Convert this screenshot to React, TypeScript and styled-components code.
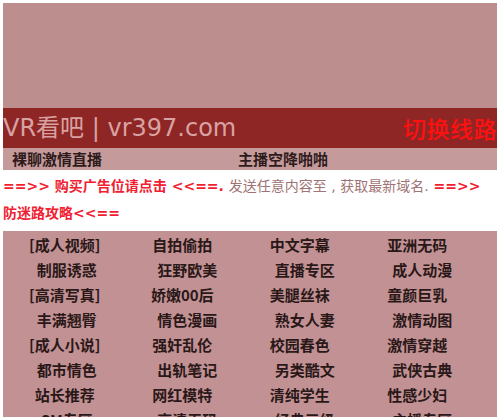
import React from "react";
import styled, { createGlobalStyle } from "styled-components";

const Global = createGlobalStyle`
  html, body { margin: 0; padding: 0; background: #ffffff; }
  body { font-family: "DejaVu Sans", "Noto Sans CJK SC", sans-serif; overflow: hidden; }
`;

const Page = styled.div`
  padding: 3px;
  width: 494px;
  height: 411px;
  overflow: hidden;
`;

const Banner = styled.div`
  height: 105px;
  background: #bc8f8e;
`;

const HeaderBar = styled.div`
  height: 40px;
  background: #8e2626;
  display: flex;
  align-items: center;
  justify-content: space-between;
`;

const Title = styled.div`
  font-family: "DejaVu Sans", "Noto Sans CJK SC", sans-serif;
  font-size: 24px;
  color: #d9a2a2;
  line-height: 40px;
  white-space: nowrap;
`;

const SwitchLink = styled.a`
  font-family: "Noto Sans CJK SC", sans-serif;
  font-size: 23px;
  font-weight: 500;
  color: #ff1010;
  text-decoration: none;
  letter-spacing: 0.5px;
  line-height: 40px;
`;

const SubNav = styled.div`
  height: 22px;
  background: #c49a9a;
  display: flex;
  align-items: center;
`;

const SubLink = styled.a<{ $w: number; $pl: number }>`
  width: ${(p) => p.$w}px;
  padding-left: ${(p) => p.$pl}px;
  box-sizing: border-box;
  font-family: "Noto Sans CJK SC", sans-serif;
  font-size: 15px;
  font-weight: 700;
  color: #2e1a1a;
  text-decoration: none;
  line-height: 22px;
`;

const Notice = styled.div`
  padding-top: 3px;
  margin-bottom: 4px;
`;

const NoticeLine = styled.div`
  font-family: "DejaVu Sans", "Noto Sans CJK SC", sans-serif;
  font-size: 14px;
  font-weight: 700;
  line-height: 27px;
  white-space: nowrap;
`;

const Red = styled.span`
  color: #f02030;
`;

const Muted = styled.span`
  color: #a07474;
  font-weight: 400;
`;

const CategoryBox = styled.div`
  background: #c29193;
  padding: 1px 0 0 3px;
  height: 200px;
  overflow: hidden;
`;

const Grid = styled.div`
  width: 470px;
  display: grid;
  grid-template-columns: repeat(4, 117.5px);
  grid-auto-rows: 25px;
`;

const Cell = styled.a<{ $shift: number }>`
  display: flex;
  align-items: center;
  justify-content: center;
  padding-left: ${(p) => p.$shift}px;
  font-family: "Noto Sans CJK SC", sans-serif;
  font-size: 15px;
  font-weight: 700;
  color: #2a1818;
  text-decoration: none;
  white-space: nowrap;
`;

const rows: string[][] = [
  ["[成人视频]", "自拍偷拍", "中文字幕", "亚洲无码"],
  ["制服诱惑", "狂野欧美", "直播专区", "成人动漫"],
  ["[高清写真]", "娇嫩00后", "美腿丝袜", "童颜巨乳"],
  ["丰满翘臀", "情色漫画", "熟女人妻", "激情动图"],
  ["[成人小说]", "强奸乱伦", "校园春色", "激情穿越"],
  ["都市情色", "出轨笔记", "另类酷文", "武侠古典"],
  ["站长推荐", "网红模特", "清纯学生", "性感少妇"],
  ["SM专区", "高清无码", "经典三级", "主播专区"],
];

export default function App() {
  return (
    <>
      <Global />
      <Page>
        <Banner />
        <HeaderBar>
          <Title>VR看吧 | vr397.com</Title>
          <SwitchLink href="#">切换线路</SwitchLink>
        </HeaderBar>
        <SubNav>
          <SubLink href="#" $w={235} $pl={9}>裸聊激情直播</SubLink>
          <SubLink href="#" $w={200} $pl={0}>主播空降啪啪</SubLink>
        </SubNav>
        <Notice>
          <NoticeLine>
            <Red>==&gt;&gt; 购买广告位请点击 &lt;&lt;==.</Red>{" "}
            <Muted>发送任意内容至 , 获取最新域名.</Muted>{" "}
            <Red>==&gt;&gt;</Red>
          </NoticeLine>
          <NoticeLine>
            <Red>防迷路攻略&lt;&lt;==</Red>
          </NoticeLine>
        </Notice>
        <CategoryBox>
          <Grid>
            {rows.map((r, ri) =>
              r.map((t, ci) => (
                <Cell
                  key={`${ri}-${ci}`}
                  href="#"
                  $shift={ri % 2 === 1 ? (ci === 0 ? 4 : 10) : 0}
                >
                  {t}
                </Cell>
              ))
            )}
          </Grid>
        </CategoryBox>
      </Page>
    </>
  );
}
